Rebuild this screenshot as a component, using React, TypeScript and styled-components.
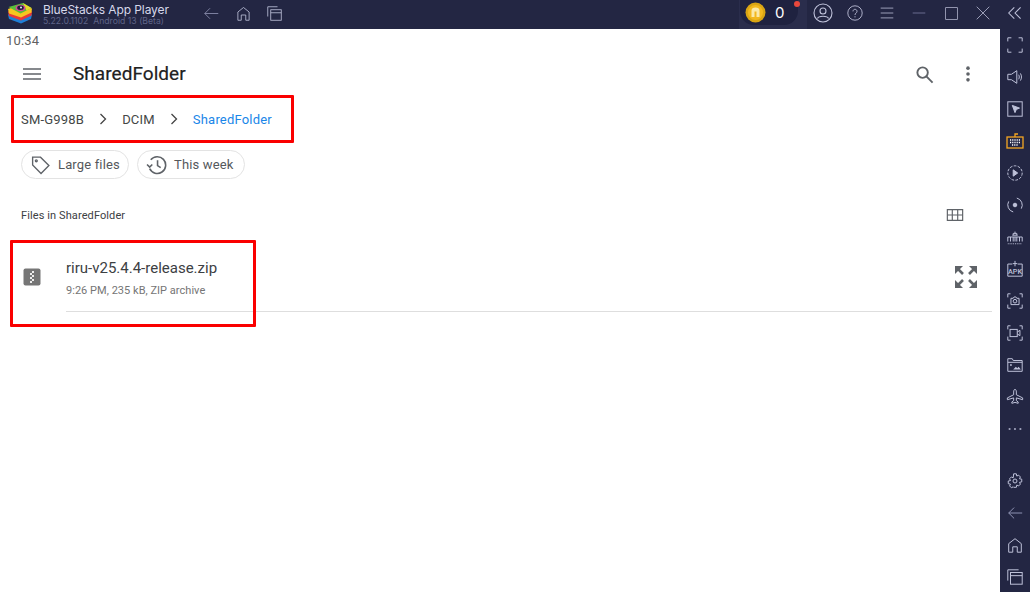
import React from "react";
import styled, { createGlobalStyle } from "styled-components";

const Global = createGlobalStyle`
  html, body { margin: 0; padding: 0; background: #fff; }
  body { font-family: Roboto, "Liberation Sans", sans-serif; }
`;

const Root = styled.div`
  position: relative; width: 1030px; height: 592px; overflow: hidden;
  display: flex; flex-direction: column; background: #fff;
`;
const TopBar = styled.header`
  height: 29px; flex: none; background: #232643; display: flex; align-items: center;
`;
const Logo = styled.svg`width: 26px; height: 22px; margin: 0 0 3px 7px; flex: none;`;
const TitleBlock = styled.div`
  margin-left: 10px; width: 160px; display: flex; flex-direction: column; flex: none;
  font-family: Inter, Roboto, sans-serif;
`;
const AppName = styled.div`font-size: 12px; line-height: 13px; color: #d6d8ea; margin-top: 1px; white-space: nowrap; letter-spacing: -0.1px;`;
const AppVersion = styled.div`font-size: 8.7px; line-height: 11px; color: #5f6488; white-space: nowrap;`;
const NavIcons = styled.div`display: flex; align-items: center; gap: 16.5px; margin: 0 0 3px 1px;`;
const Spacer = styled.div`flex: 1;`;
const CoinBox = styled.div`
  position: relative; width: 68px; height: 29px; background: #2a2d4c; flex: none;
`;
const CoinPill = styled.div`
  width: 58px; height: 25px; margin-left: 1px; background: #1f2240; border-radius: 0 0 14px 14px;
  display: flex; align-items: center;
`;
const CoinSvg = styled.svg`width: 21px; height: 21px; margin-left: 5px; flex: none;`;
const CoinCount = styled.span`
  margin-left: 9px; color: #fff; font-size: 15px; font-family: Inter, sans-serif;
`;
const Dot = styled.span`
  position: absolute; right: 7px; top: 1px; width: 6px; height: 6px; border-radius: 50%; background: #e8483c;
`;
const WinIcons = styled.div`
  display: grid; grid-template-columns: repeat(6, 32px) 31px; justify-items: center; align-items: center;
  padding-bottom: 3px;
`;
const Body = styled.div`flex: 1; display: flex; min-height: 0;`;
const Content = styled.main`flex: 1; display: flex; flex-direction: column; min-width: 0; color: #3c4043;`;
const SideBar = styled.aside`
  width: 30px; flex: none; background: #232643; display: flex; flex-direction: column; align-items: center;
`;
const SideSlot = styled.div`
  height: 32px; flex: none; display: flex; align-items: center; justify-content: center;
`;
const BottomSlot = styled(SideSlot)`
  box-sizing: border-box; padding-top: 2px;
`;
const Status = styled.div`
  height: 24px; flex: none; padding-left: 6px; font-size: 13px; line-height: 24px; color: #616161; letter-spacing: 0.2px;
`;
const AppBar = styled.div`
  height: 42px; flex: none; display: flex; align-items: center; padding-left: 23px;
`;
const Title = styled.h1`
  margin: 0 0 0 32px; font-size: 19px; font-weight: 400; line-height: 42px; color: #212121; flex: 1;
  letter-spacing: 0.05px; -webkit-text-stroke: 0.2px #212121;
`;
const AppBarActions = styled.div`display: flex; align-items: center; gap: 25px; margin-right: 23px;`;
const Crumbs = styled.nav`
  height: 38px; flex: none; margin-top: 5px; padding-left: 21px; display: flex; align-items: center;
  font-size: 13px; font-weight: 400; letter-spacing: 0.2px;
`;
const Crumb = styled.span<{ $active?: boolean }>`color: ${p => (p.$active ? "#1a86e8" : "#444746")};`;
const Chevron = styled.svg`width: 10px; height: 12px; margin: 0 14px; flex: none;`;
const Chips = styled.div`display: flex; gap: 8px; padding-left: 21px; margin-top: 12px; flex: none;`;
const Chip = styled.div`
  width: 108px; height: 29px; box-sizing: border-box; border: 1px solid #e3e3e3; border-radius: 15px;
  display: flex; align-items: center; padding-left: 8px; gap: 7px;
  font-size: 13px; font-weight: 400; color: #55585c; letter-spacing: 0.15px;
`;
const SectionHead = styled.div`
  height: 22px; flex: none; margin-top: 25px; padding: 0 36px 0 21px; display: flex; align-items: center; justify-content: space-between;
  font-size: 11px; font-weight: 400; color: #3c4043; letter-spacing: 0.1px;
`;
const FileRow = styled.div`
  margin-top: 15px; margin-right: 8px; height: 71px; flex: none; display: flex; padding-left: 23px;
`;
const FileIcon = styled.svg`width: 18px; height: 18px; margin-top: 27px; flex: none;`;
const FileMain = styled.div`
  flex: 1; margin-left: 25px; border-bottom: 1px solid #dedede; display: flex; justify-content: space-between;
`;
const FileName = styled.div`font-size: 15px; line-height: 17px; color: #3c4043; margin-top: 19px;`;
const FileMeta = styled.div`font-size: 11px; line-height: 13px; color: #757575; margin-top: 7px; letter-spacing: 0.03px;`;
const ExpandIcon = styled.svg`width: 24px; height: 24px; margin: 24px 14px 0 0; flex: none;`;
const Highlight = styled.div<{ $x: number; $y: number; $w: number; $h: number }>`
  position: absolute; left: ${p => p.$x}px; top: ${p => p.$y}px; width: ${p => p.$w}px; height: ${p => p.$h}px;
  box-sizing: border-box; border: 3px solid #fa0000; border-radius: 1px; pointer-events: none;
`;

type P = { size?: number; children: React.ReactNode; color?: string; sw?: number };
const Ico = ({ size = 20, children, color = "#bfc2da", sw = 1.1 }: P) => (
  <svg width={size} height={size} viewBox="0 0 20 20" fill="none" stroke={color} strokeWidth={sw} style={{ flex: "none", display: "block" }}>
    {children}
  </svg>
);

const side: React.ReactNode[] = [
  <Ico size={18}><path d="M2 6V2h4M14 2h4v4M18 14v4h-4M6 18H2v-4" /></Ico>,
  <Ico size={18}><path d="M2 7h4l6-4v14l-6-4H2zM14 7.500c1 1.500 1 3.500 0 5M16 6c1.600 2.500 1.600 5.500 0 8" /></Ico>,
  <Ico size={18}><rect x="2" y="2" width="16" height="16" /><path d="M7 6l8 3-3.500 1.500L10 14z" fill="#bfc2da" /></Ico>,
  <Ico size={20} color="#f5a623" sw={1.300}><rect x="2" y="6" width="16" height="11" /><path d="M10 6V3h3" /><path d="M5 9h10M5 11.500h10M7 14h6" strokeDasharray="1 .8" stroke="#fff" /></Ico>,
  <Ico size={18}><circle cx="10" cy="10" r="8" strokeDasharray="3 1.500" /><path d="M8 6.500l5 3.500-5 3.500z" fill="#bfc2da" /></Ico>,
  <Ico size={18}><path d="M12 2.300A8 8 0 0 1 17 14M8 17.700A8 8 0 0 1 3 6" /><circle cx="10" cy="10" r="2" fill="#bfc2da" /></Ico>,
  <Ico size={18}><path d="M2 15v-5h16v5M5 15v-5M7 8h6M8 8V6h4v2M10 6V4M8 10v5M10 10v5M12 10v5M15 10v5" /><path d="M2 17.500h16" strokeDasharray="1 1" /></Ico>,
  <Ico size={18}><path d="M7 4.500H2V18h16V4.500h-5M10 1v6M7.500 4h5" /><text x="10" y="15.500" fontSize="8" fontFamily="Roboto" fontWeight="500" textAnchor="middle" fill="#bfc2da" stroke="none">APK</text></Ico>,
  <Ico size={18}><path d="M2 6V2h3M15 2h3v4M18 14v4h-3M5 18H2v-4" /><path d="M5.500 7h2.500l1-1.500h2l1 1.500h2.500v7h-9z" /><circle cx="10" cy="10.200" r="2" /></Ico>,
  <Ico size={18}><path d="M2 6V2h3M15 2h3v4M18 14v4h-3M5 18H2v-4" /><rect x="4.500" y="6" width="8" height="8" /><path d="M12.500 9l3-2v6l-3-2" /></Ico>,
  <Ico size={18}><path d="M2 17V3h5l1 2h10v12zM2 7h16" /><circle cx="5.500" cy="10" r="1" fill="#bfc2da" stroke="none" /><path d="M8 15l3-3 1.500 1.500 1.500-1.500 2.500 3z" fill="#bfc2da" stroke="none" /></Ico>,
  <Ico size={18}><path d="M10 1.500c1 0 1.500 1.500 1.500 3v3l7 3.500v2l-7-2v3l2 1.500v1.500l-3.500-1-3.500 1v-1.500l2-1.500v-3l-7 2v-2l7-3.500v-3c0-1.500.5-3 1.500-3z" /></Ico>,
  <Ico size={14} sw={1.800}><path d="M1 10h2.500M8.700 10h2.500M16.500 10h2.500" /></Ico>,
];
const sideBottom: React.ReactNode[] = [
  <Ico size={18}><path d="M8.500 2h3l.5 2.500 2-1 2 2-1 2 2.500.5v3l-2.500.5 1 2-2 2-2-1-.5 2.500h-3L8 16.500l-2 1-2-2 1-2-2.500-.5v-3L5 9.500l-1-2 2-2 2 1z" /><circle cx="10" cy="10" r="2.200" /></Ico>,
  <Ico size={18} color="#8f93b3"><path d="M18 10H3M9 4l-6 6 6 6" /></Ico>,
  <Ico size={18}><path d="M3 18V8.500L10 3l7 5.500V18h-4.500v-6h-5v6z" /></Ico>,
  <Ico size={18}><path d="M2 14V2h12" /><rect x="5" y="5" width="13" height="13" /><path d="M5 8.500h13" /></Ico>,
];

export default function App() {
  return (
    <Root>
      <Global />
      <TopBar>
        <Logo viewBox="0 0 26 22">
          <path d="M1 12.500L13 9l12 3.500-1 4.500-10 4.500L2 17z" fill="#1f7fd6" />
          <path d="M1 9.500L13 6l12 3.500-.5 4L14 18.500 2 14z" fill="#e8383a" />
          <path d="M1 7L13 3l12 3.500-.5 4L14 15.500 2 11.500z" fill="#f7c521" />
          <path d="M1.500 5L16 1l8.500 5-11 5.500z" fill="#58bf3a" />
          <path d="M16 1l8.500 5-5 2.500z" fill="#e8d92a" />
          <ellipse cx="13.500" cy="6" rx="5" ry="3.200" fill="#d9459a" />
          <ellipse cx="13.500" cy="5.800" rx="3.300" ry="2.200" fill="#1c1f3a" />
          <circle cx="14" cy="5.500" r="1" fill="#e6f0ff" />
        </Logo>
        <TitleBlock>
          <AppName>BlueStacks App Player</AppName>
          <AppVersion>5.22.0.1102&nbsp; Android 13 (Beta)</AppVersion>
        </TitleBlock>
        <NavIcons>
          <Ico size={15} color="#8f93b3"><path d="M19 10H1M8 3L1 10l7 7" /></Ico>
          <Ico size={15}><path d="M2.500 19V8L10 2l7.500 6v11h-4.500v-7h-6v7z" /></Ico>
          <Ico size={15}><path d="M1 14V1h13" /><rect x="5" y="5" width="14" height="14" /><path d="M5 9h14" /></Ico>
        </NavIcons>
        <Spacer />
        <CoinBox>
          <CoinPill>
            <CoinSvg viewBox="0 0 21 21">
              <circle cx="10.500" cy="10.500" r="10" fill="#d9a514" />
              <circle cx="10.500" cy="10.500" r="7.500" fill="#f2b81e" />
              <path d="M6.500 15V8.500c0-2 1.500-3 4-3s4 1 4 3V15h-3V9.500h-2V15z" fill="#fbe9a6" />
            </CoinSvg>
            <CoinCount>0</CoinCount>
          </CoinPill>
          <Dot />
        </CoinBox>
        <WinIcons>
          <Ico size={20}><circle cx="10" cy="10" r="9" /><circle cx="10" cy="8" r="3" /><path d="M4.500 15.500c1-3 10-3 11 0" /></Ico>
          <Ico size={16}><circle cx="10" cy="10" r="9" /><path d="M7.500 8c0-3.500 5-3.500 5 0 0 2-2.500 2-2.500 4.500M10 14v1.500" /></Ico>
          <Ico size={14}><path d="M1 3h18M1 10h18M1 17h18" /></Ico>
          <Ico size={14} sw={1.400} color="#6a6e90"><path d="M1 10h18" /></Ico>
          <Ico size={13}><rect x="1" y="1" width="18" height="18" /></Ico>
          <Ico size={14}><path d="M1 1l18 18M19 1L1 19" /></Ico>
          <Ico size={14} sw={1.500}><path d="M9 2l-8 8 8 8M18 2l-8 8 8 8" /></Ico>
        </WinIcons>
      </TopBar>
      <Body>
        <Content>
          <Status>10:34</Status>
          <AppBar>
            <Ico size={18} color="#5f6368" sw={1.800}><path d="M0 4.500h20M0 10h20M0 15.500h20" /></Ico>
            <Title>SharedFolder</Title>
            <AppBarActions>
              <Ico size={19} color="#5f6368" sw={2}><circle cx="8" cy="8" r="5.500" /><path d="M12 12l6.500 6.500" /></Ico>
              <Ico size={18} color="#5f6368"><g fill="#5f6368" stroke="none"><circle cx="10" cy="3.500" r="2" /><circle cx="10" cy="10" r="2" /><circle cx="10" cy="16.500" r="2" /></g></Ico>
            </AppBarActions>
          </AppBar>
          <Crumbs>
            <Crumb>SM-G998B</Crumb>
            <Chevron viewBox="0 0 10 12"><path d="M2.500 1l5 5-5 5" fill="none" stroke="#444" strokeWidth="1.300" /></Chevron>
            <Crumb>DCIM</Crumb>
            <Chevron viewBox="0 0 10 12"><path d="M2.500 1l5 5-5 5" fill="none" stroke="#444" strokeWidth="1.300" /></Chevron>
            <Crumb $active>SharedFolder</Crumb>
          </Crumbs>
          <Chips>
            <Chip>
              <Ico size={21} color="#5f6368" sw={1.300}><path d="M2.500 3h7.500l8 8-7.500 7.500-8-8z" /><circle cx="6" cy="6.500" r=".9" /></Ico>
              Large files
            </Chip>
            <Chip>
              <Ico size={21} color="#5f6368" sw={1.500}><path d="M4.500 5.500A8 8 0 1 1 3.500 14M1 10l2.500 2.500L6 10M11 6v5l3 2" /></Ico>
              This week
            </Chip>
          </Chips>
          <SectionHead>
            Files in SharedFolder
            <Ico size={18} color="#5f6368" sw={1.300}><path d="M1.500 4h17v12h-17zM1.500 10h17M7 4v12M13 4v12" /></Ico>
          </SectionHead>
          <FileRow>
            <FileIcon viewBox="0 0 18 18">
              <rect x="0.500" y="0.500" width="17" height="17" rx="2" fill="#767676" />
              <path d="M9 3h2v2H9zM7 5h2v2H7zM9 7h2v2H9zM7 9h2v2H7zM9 11h2v2H9zM7 13h2v2H7z" fill="#eee" />
            </FileIcon>
            <FileMain>
              <div>
                <FileName>riru-v25.4.4-release.zip</FileName>
                <FileMeta>9:26 PM, 235 kB, ZIP archive</FileMeta>
              </div>
              <ExpandIcon viewBox="0 0 24 24">
                <path d="M1 1h8L1 9zM23 1v8l-8-8zM1 23v-8l8 8zM23 23h-8l8-8z" fill="#5f6368" />
                <path d="M4 4l5 5M20 4l-5 5M4 20l5-5M20 20l-5-5" stroke="#5f6368" strokeWidth="2.600" />
              </ExpandIcon>
            </FileMain>
          </FileRow>
        </Content>
        <SideBar>
          {side.map((n, i) => <SideSlot key={i}>{n}</SideSlot>)}
          <Spacer />
          {sideBottom.map((n, i) => <BottomSlot key={i}>{n}</BottomSlot>)}
        </SideBar>
      </Body>
      <Highlight $x={11} $y={95} $w={283} $h={48} />
      <Highlight $x={10} $y={240} $w={246} $h={87} />
    </Root>
  );
}
